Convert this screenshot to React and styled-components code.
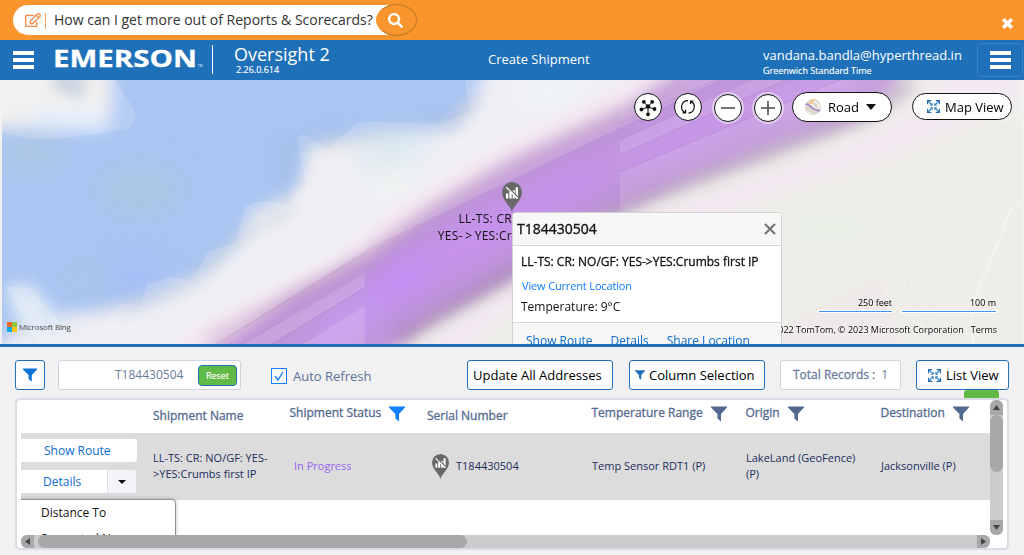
import React from "react";
import styled, { createGlobalStyle } from "styled-components";
import { FaSearch, FaRegEdit } from "react-icons/fa";

const Global = createGlobalStyle`
  *, *::before, *::after { box-sizing: border-box; }
  html, body { margin: 0; padding: 0; background: #f1f1f1; overflow: hidden; }
  body { font-family: "Open Sans", "Noto Sans", sans-serif; font-size: 13px; color: #111; }
  svg { display: block; flex: none; }
`;

const Page = styled.div`
  width: 1024px;
  height: 555px;
  display: flex;
  flex-direction: column;
  overflow: hidden;
  background: #f1f1f1;
`;

const Text = styled.span`
  display: block;
  white-space: nowrap;
  font-size: ${(p) => p.$size || 13}px;
  line-height: ${(p) => p.$line || 18}px;
  color: ${(p) => p.$color || "inherit"};
  letter-spacing: ${(p) => p.$track || 0}px;
  -webkit-text-stroke: ${(p) => (p.$heavy ? `${p.$heavy}px currentColor` : "0")};
`;

const Loose = styled.span`
  letter-spacing: 2.6px;
`;

/* ---------- promo bar ---------- */

const PromoBar = styled.div`
  height: 40px;
  flex: none;
  background: #f8952c;
  display: flex;
  align-items: center;
  justify-content: space-between;
  padding: 0 10px 0 13px;
`;

const AskBox = styled.div`
  display: flex;
  align-items: center;
  width: 404px;
  height: 30px;
  background: linear-gradient(to right, #fff 375px, transparent 375px);
  border-radius: 15px 0 0 15px;
  padding-left: 12px;
`;

const Caret = styled.span`
  width: 1px;
  height: 16px;
  margin: 1px 8px 0 4px;
  background: #f8a765;
`;

const AskButton = styled.span`
  display: flex;
  align-items: center;
  justify-content: center;
  width: 41px;
  height: 32px;
  margin-left: auto;
  padding-right: 2px;
  flex: none;
  border-radius: 50%;
  border: 1px solid #c47a2a;
  border-left-color: #f8952c;
  background: #f8952c;
  color: #fff;
`;

const CloseSlot = styled.div`
  margin-top: 6px;
`;

/* ---------- header ---------- */

const Header = styled.header`
  height: 40px;
  flex: none;
  background: #1e70b8;
  color: #fff;
  display: grid;
  grid-template-columns: 54px 159px 253px 1fr 214px 47px;
`;

const HeaderCell = styled.div`
  display: flex;
  flex-direction: column;
  padding: ${(p) => p.$pad || "0"};
  border-right: ${(p) => (p.$rule ? "1px solid transparent" : "0")};
  border-image: ${(p) =>
    p.$rule ? "linear-gradient(transparent 6px, #fff 6px, #fff 33px, transparent 33px) 1" : "none"};
`;

const Bars = styled.div`
  display: flex;
  flex-direction: column;
  gap: 3px;
  width: 21px;
`;

const Bar = styled.span`
  height: 4px;
  background: #fff;
`;

const MenuToggle = styled.div`
  display: flex;
  align-items: center;
  justify-content: center;
  height: 34px;
  margin: 3px 1px 0 0;
  border: 1px solid #3a82c2;
  border-radius: 4px;
`;

/* ---------- map ---------- */

const MapPane = styled.section`
  height: 264px;
  flex: none;
  margin: 0 2px;
  position: relative;
  overflow: hidden;
`;

const MapArt = styled.svg`
  width: 1020px;
  height: 264px;
`;

const MapControls = styled.div`
  position: absolute;
  top: 12px;
  right: 10px;
  display: flex;
  align-items: flex-start;
`;

const Round = styled.span`
  width: 28px;
  height: 28px;
  margin: ${(p) => (p.$halo ? 2 : 1)}px 12px 0 0;
  border-radius: 50%;
  border: 1px solid #111;
  background: #fff;
  display: flex;
  align-items: center;
  justify-content: center;
  box-shadow: ${(p) => (p.$halo ? "0 0 0 2px rgba(255,255,255,.45)" : "none")};
`;

const Pill = styled.span`
  display: flex;
  align-items: center;
  height: ${(p) => p.$h}px;
  width: 100px;
  border: 1px solid #111;
  border-radius: 16px;
  background: #fff;
  color: #000;
  margin: ${(p) => p.$margin};
  padding-left: ${(p) => p.$left}px;
  gap: ${(p) => p.$gap}px;
`;

const Pin = styled.div`
  position: absolute;
  left: 500px;
  top: 102px;
`;

const PinLabel = styled.div`
  position: absolute;
  right: 510px;
  top: 130px;
  display: flex;
  flex-direction: column;
  align-items: flex-end;
`;

const Popup = styled.div`
  position: absolute;
  left: 510px;
  top: 132px;
  width: 270px;
  height: 150px;
  background: #fff;
  border: 1px solid #d3d3d3;
  border-radius: 4px;
  overflow: hidden;
`;

const PopupHead = styled.div`
  height: 33px;
  background: #f7f7f7;
  border-bottom: 1px solid #d6d6d6;
  display: flex;
  align-items: center;
  justify-content: space-between;
  padding: 0 5px 0 4px;
`;

const PopupBody = styled.div`
  height: 76px;
  padding: 7px 8px 0;
  display: flex;
  flex-direction: column;
`;

const PopupLink = styled.div`
  padding-left: 1px;
`;

const PopupFoot = styled.div`
  height: 40px;
  background: #f7f7f7;
  border-top: 1px solid #d6d6d6;
  display: flex;
  gap: 18px;
  padding: 9px 13px 0;
`;

const BingMark = styled.div`
  position: absolute;
  left: 5px;
  bottom: 12px;
  display: flex;
  align-items: center;
  gap: 2px;
`;

const Credits = styled.div`
  position: absolute;
  right: 25px;
  bottom: 6px;
  width: 216px;
  overflow: hidden;
  display: flex;
  justify-content: flex-end;
  gap: 7px;
  color: #000;
  text-shadow: 0 0 2px #fff, 0 0 2px #fff;
`;

const Scales = styled.div`
  position: absolute;
  right: 26px;
  bottom: 32px;
  display: flex;
  gap: 10px;
  color: #000;
`;

const Scale = styled.div`
  width: ${(p) => p.$w}px;
  display: flex;
  flex-direction: column;
  align-items: flex-end;
`;

const ScaleLine = styled.span`
  width: 100%;
  height: 1px;
  background: #3b96ff;
  box-shadow: 0 0 0 1px #fff;
`;

/* ---------- list pane ---------- */

const ListPane = styled.section`
  flex: 1;
  border-top: 3px solid #1e70b8;
  padding: 13px 15px 0;
  display: flex;
  flex-direction: column;
`;

const Toolbar = styled.div`
  display: flex;
  height: 30px;
  flex: none;
`;

const Box = styled.div`
  display: flex;
  align-items: center;
  height: 30px;
  width: ${(p) => p.$w}px;
  margin-left: ${(p) => p.$ml || 0}px;
  padding-left: ${(p) => p.$pl || 0}px;
  gap: ${(p) => p.$gap || 0}px;
  border: 1px solid ${(p) => (p.$muted ? "#ced3df" : "#1e70b8")};
  border-radius: 3px;
  background: #fff;
  color: ${(p) => (p.$muted ? "#6a7c9e" : "#000")};
  flex: none;
`;

const Reset = styled.span`
  width: 39px;
  height: 21px;
  margin: 1px 3px 0 auto;
  border: 1px solid #1e70b8;
  border-radius: 4px;
  background: #62ba46;
  color: #fff;
  display: flex;
  align-items: center;
  justify-content: center;
`;

const Check = styled.div`
  display: flex;
  align-items: center;
  gap: 6px;
  width: 226px;
  padding: 2px 0 0 30px;
`;

const CheckBox = styled.span`
  width: 16px;
  height: 16px;
  border: 1px solid #0f80f5;
  background: #fff;
  display: flex;
  align-items: center;
  justify-content: center;
`;

const GreenTab = styled.div`
  width: 35px;
  height: 8px;
  flex: none;
  margin-left: 949px;
  border-radius: 3px 3px 0 0;
  background: #62ba46;
`;

const Card = styled.div`
  width: 994px;
  height: 152px;
  flex: none;
  border: 2px solid #d9dce6;
  border-radius: 5px;
  background: #fff;
  display: grid;
  grid-template: 135px 13px / 969px 13px;
  padding-left: 4px;
`;

const Viewport = styled.div`
  overflow: hidden;
  position: relative;
`;

const Row = styled.div`
  display: grid;
  grid-template-columns: 132px 136px 138px 164px 154px 135px 1fr;
  height: ${(p) => p.$h}px;
  background: ${(p) => p.$bg || "#fff"};
  color: ${(p) => p.$color};
  border-bottom: ${(p) => (p.$line ? "1px solid #d6daea" : "0")};
`;

const HeadCell = styled.div`
  display: flex;
  align-items: flex-start;
  gap: 8px;
  padding: ${(p) => (p.$filtered ? "4px 0 0 0.5px" : "7px 0 0")};
`;

const FilterSlot = styled.span`
  padding-top: 2px;
`;

const Cell = styled.div`
  display: flex;
  flex-direction: ${(p) => (p.$row ? "row" : "column")};
  align-items: ${(p) => (p.$row ? "center" : "flex-start")};
  justify-content: ${(p) => (p.$row ? "flex-start" : "center")};
  gap: ${(p) => p.$gap || 0}px;
  padding: 0 0 ${(p) => p.$pb || 0}px ${(p) => p.$pl || 0}px;
`;

const Actions = styled.div`
  display: flex;
  flex-direction: column;
  gap: 8px;
  padding-top: 6px;
`;

const ActionButton = styled.div`
  height: 23px;
  width: ${(p) => p.$w}px;
  border-radius: 0 3px 3px 0;
  overflow: hidden;
  background: #fff;
  display: flex;
  align-items: center;
  padding-left: ${(p) => p.$pl}px;
`;

const SplitArrow = styled.span`
  width: 29px;
  height: 23px;
  margin-left: auto;
  background: #f4f5fa;
  border-left: 1px solid #dcdee6;
  display: flex;
  align-items: center;
  justify-content: center;
`;

const Menu = styled.div`
  position: absolute;
  left: -4px;
  top: 99px;
  width: 159px;
  height: 80px;
  border: 1px solid #8d8d8d;
  border-radius: 4px;
  box-shadow: 0 0 4px rgba(0, 0, 0, 0.25);
  background: #fff;
  padding: 4px 0 0 23px;
`;

const VTrack = styled.div`
  display: flex;
  flex-direction: column;
  border-radius: 6px;
  background: #cbcbcb;
  overflow: hidden;
`;

const HTrack = styled(VTrack)`
  flex-direction: row;
`;

const Thumb = styled.span`
  width: ${(p) => p.$w}px;
  height: ${(p) => p.$h}px;
  margin: ${(p) => p.$m || "0"};
  border-radius: 7px;
  background: #a8a8a8;
`;

const ArrowBox = styled.span`
  width: ${(p) => p.$w}px;
  height: ${(p) => p.$h}px;
  margin: ${(p) => p.$m || "0"};
  background: #a8a8a8;
  display: flex;
  align-items: center;
  justify-content: center;
`;

/* ---------- drawings ---------- */

const Funnel = ({ size = 16, color = "#53698f" }) => (
  <svg width={size} height={size} viewBox="0 0 16 16" fill={color}>
    <path d="M0 0.5H16V1.6L10 8V15.6L6.4 12.6V8L0 1.6Z" />
  </svg>
);

const Expand = () => (
  <svg width="13" height="13" viewBox="0 0 13 13" fill="none" stroke="#1e70b8" strokeWidth="1.200">
    <path d="M.6 4.300V.6H4.300M8.700 .6h3.700V4.300M12.4 8.700v3.700H8.700M4.300 12.4H.6V8.700" />
    <path d="M.8.8l4.400 4.400M12.2.8L7.800 5.200M12.2 12.2L7.800 7.800M.8 12.2l4.400-4.400" strokeWidth="1.100" />
    <path d="M3 5.300h2.300V3M7.700 3v2.300h2.300M10 7.700H7.700V10M5.300 10V7.700H3" strokeWidth=".7" />
  </svg>
);

const Triangle = ({ dir, w = 9, h = 5, color = "#111" }) => {
  const shapes = {
    down: "0,0 10,0 5,10",
    up: "0,10 10,10 5,0",
    left: "10,0 10,10 0,5",
    right: "0,0 0,10 10,5",
  };
  return (
    <svg width={w} height={h} viewBox="0 0 10 10" preserveAspectRatio="none">
      <polygon points={shapes[dir]} fill={color} />
    </svg>
  );
};

const Marker = ({ w, h }) => (
  <svg width={w} height={h} viewBox="0 0 20 29" preserveAspectRatio="none">
    <path d="M10 29C8.500 23 0 17.500 0 10A10 10 0 0 1 20 10C20 17.500 11.500 23 10 29Z" fill="#686868" />
    <path d="M4 11h2.200v5H4zM7.300 9.500h2.400v6.500H7.300zM10.700 8h2.200v8h-2.200zM13.600 5H16v11h-2.400z" fill="#fff" />
    <path d="M5.400 4.300L16 14.800" stroke="#686868" strokeWidth="1.300" />
    <path d="M4.300 5L15.600 16" stroke="#fff" strokeWidth="1.300" />
  </svg>
);

const Hub = () => (
  <svg width="20" height="20" viewBox="0 0 20 20" stroke="#111" strokeWidth="1">
    <path d="M10 10L6 5M10 10L14 5M10 10L3.500 12.500M10 10L16.500 12M10 10v7" />
    <g stroke="none" fill="#111">
      <circle cx="10" cy="9.500" r="2.300" />
      <circle cx="5.800" cy="4.800" r="1.900" />
      <circle cx="14.200" cy="4.800" r="1.900" />
      <circle cx="3.500" cy="12.500" r="1.900" />
      <circle cx="16.500" cy="12" r="1.900" />
      <circle cx="10" cy="17.300" r="1.900" />
    </g>
  </svg>
);

const Refresh = () => (
  <svg width="18" height="18" viewBox="0 0 18 18" fill="none" stroke="#111" strokeWidth="1.200">
    <path d="M6.200 14.600A6.300 6.300 0 0 1 9 2.600M12 3.400A6.300 6.300 0 0 1 9.500 15.200M3.600 14.800h3v-3M14.600 3h-3v3" />
  </svg>
);

const Globe = () => (
  <svg width="16" height="16" viewBox="0 0 16 16">
    <clipPath id="globeClip"><circle cx="8" cy="8" r="8" /></clipPath>
    <g clipPath="url(#globeClip)" fill="none">
      <rect width="16" height="16" fill="#dcd8cb" />
      <path d="M7 0L16 8M10 12L16 6M2 13L8 16M5 3L12 12" stroke="#f6f3ea" strokeWidth="1.500" />
      <path d="M5 5L9 0" stroke="#f0b968" strokeWidth="1.600" />
      <path d="M0 5C5 4 6 12 16 12" stroke="#a583c4" strokeWidth="1.800" />
    </g>
  </svg>
);

const MapCanvas = () => (
  <MapArt viewBox="2 80 1020 264">
    <defs>
      <filter id="soft" filterUnits="userSpaceOnUse" x="-60" y="0" width="1160" height="440"><feGaussianBlur stdDeviation="8" /></filter>
      <filter id="wide" filterUnits="userSpaceOnUse" x="-60" y="0" width="1160" height="440"><feGaussianBlur stdDeviation="14" /></filter>
    </defs>
    <rect x="0" y="80" width="1024" height="264" fill="#eeede9" />
    <g filter="url(#soft)">
      <path d="M480 -20H760L610 105L512 155L430 205L370 250L280 290L160 400H-60V325L150 290L205 270L250 225L300 195L320 155L400 140Z" fill="#eeeef3" />
      <path d="M-80 -20H512L478 95L452 125L430 133L370 135L310 145L300 185L285 198L255 212L235 245L200 276L145 298L90 312L40 315L-80 400Z" fill="#a9c5f2" />
      <path d="M710 20L620 88L512 140L400 205L340 255L200 325L110 400L190 400L370 262L512 165L720 70Z" fill="#f3e2ef" />
      <path d="M745 20L620 112L512 162L430 210L370 254L290 296L140 400H330L425 325L512 278L600 220L690 180L780 146L870 114L950 20Z" fill="#bf95d9" />
      <path d="M350 400L430 342L512 290L620 228L730 186L830 152L895 124L960 60L1020 60V98L900 150L760 198L620 262L500 315L420 400Z" fill="#f3e8f2" />
      <path d="M-60 20H102L112 95L108 127L-60 128Z" fill="#efefed" />
      <path d="M30 110H108V130H40Z" fill="#e0ecfb" />
      <path d="M20 335H75L32 285H5Z" fill="#dce8f5" />
    </g>
    <g filter="url(#wide)">
      <ellipse cx="410" cy="275" rx="60" ry="20" transform="rotate(-32 410 275)" fill="#c48ff5" />
      <ellipse cx="480" cy="235" rx="75" ry="22" transform="rotate(-30 480 235)" fill="#c792ed" />
      <ellipse cx="345" cy="325" rx="45" ry="14" transform="rotate(-30 345 325)" fill="#c69af6" />
      <ellipse cx="560" cy="190" rx="60" ry="20" transform="rotate(-28 560 190)" fill="#c491ea" />
      <ellipse cx="690" cy="132" rx="90" ry="18" transform="rotate(-24 690 132)" fill="#c997ea" />
      <ellipse cx="810" cy="90" rx="60" ry="14" transform="rotate(-20 810 90)" fill="#cda0ef" />
      <ellipse cx="392" cy="150" rx="40" ry="14" transform="rotate(-15 392 150)" fill="#cfe4ee" />
      <ellipse cx="390" cy="178" rx="25" ry="12" fill="#eef3ee" />
      <ellipse cx="830" cy="228" rx="55" ry="16" fill="#e9f1e5" />
      <ellipse cx="140" cy="190" rx="40" ry="20" fill="#a9c8df" />
      <ellipse cx="130" cy="275" rx="30" ry="18" fill="#a6bdf8" />
      <ellipse cx="30" cy="155" rx="35" ry="12" fill="#afc9dd" />
      <ellipse cx="250" cy="110" rx="60" ry="12" fill="#abc8f5" />
      <ellipse cx="90" cy="278" rx="25" ry="14" fill="#a9c6e6" />
      <ellipse cx="550" cy="90" rx="30" ry="10" fill="#eef6fb" />
    </g>
    <g filter="url(#soft)" fill="none" strokeWidth="8" strokeLinecap="round">
      <path d="M210 340L290 298L360 262L430 212L512 165L620 115L680 85" stroke="#a87fae" strokeOpacity=".6" />
      <path d="M400 338L500 280L580 232L650 196L770 152L870 114L910 85" stroke="#866a90" strokeOpacity=".7" />
      <path d="M120 312L190 285L245 235L290 210" stroke="#a8b9cd" strokeOpacity=".55" />
      <path d="M285 195L285 145L365 136L450 120" stroke="#a0b4d2" strokeOpacity=".45" />
      <path d="M60 78L78 88" stroke="#b3c3dc" strokeWidth="14" />
      <path d="M450 128L475 100" stroke="#b2bfda" />
    </g>
    <g fill="#fff" fillOpacity=".14">
      <path d="M2 80V132L28 139H58L130 129C137 120 136 110 130 103L115 80H98L80 98C65 102 52 101 48 90L52 80Z" />
      <path d="M5 286L31 288L70 335L92 334L120 303L141 306L147 284L170 277L192 281L208 252L235 243L246 206C265 196 278 206 291 204L294 190L307 189L297 141C298 133 305 132 310 138L327 150L359 122H380L440 124L470 112L465 80H720L365 250L216 344H37Z" />
      <path d="M243 344L365 272V287L272 344ZM302 344L365 304V344Z" />
      <path d="M620 140L750 80H785L620 155ZM620 172L840 80H1022V123H900L620 220Z" fillOpacity=".11" />
    </g>
    <g fill="none" stroke="#765b85" strokeOpacity=".16">
      <path d="M216 344L366 253M243 344L366 273M272 344L366 287M302 344L366 305" />
      <path d="M620 123L715 80M620 140L752 80M620 155L785 80M620 172L840 80" />
    </g>
    <path d="M620 80L715 80L620 123Z" fill="#fff" fillOpacity=".06" />
    <g fill="none">
      <path d="M755 334L890 267Q902 262 909 272L945 350" stroke="#e5e3dd" strokeWidth="12" />
      <path d="M755 334L890 267Q902 262 909 272L945 350" stroke="#efedea" strokeWidth="10.800" />
      <path d="M1022 202Q1008 208 1003 230L976 295Q968 318 974 344" stroke="#f4f3ef" strokeWidth="2" />
    </g>
    <path d="M780 330L880 280L900 344H780Z" fill="#f3e3ea" fillOpacity=".4" />
  </MapArt>
);

const columns = [
  { label: "" },
  { label: "Shipment Name" },
  { label: "Shipment Status", filter: "#0f80ff" },
  { label: "Serial Number" },
  { label: "Temperature Range", filter: "#53698f" },
  { label: "Origin", filter: "#53698f" },
  { label: "Destination", filter: "#53698f" },
];

export default function App() {
  return (
    <Page>
      <Global />
      <PromoBar>
        <AskBox>
          <FaRegEdit size={16} color="#f58a4b" />
          <Caret />
          <Text $size={14} $color="#333">How can I get more out of Reports &amp; Scorecards?</Text>
          <AskButton><FaSearch size={15} /></AskButton>
        </AskBox>
        <CloseSlot>
          <svg width="13" height="13" viewBox="0 0 13 13" stroke="#fff" strokeWidth="3.600" strokeLinecap="square">
            <path d="M3.500 3.500l6 6M9.500 3.500l-6 6" />
          </svg>
        </CloseSlot>
      </PromoBar>

      <Header>
        <HeaderCell $pad="11px 0 0 13px">
          <Bars><Bar /><Bar /><Bar /></Bars>
        </HeaderCell>
        <HeaderCell $pad="5px 0 0 0" $rule>
          <svg width="150" height="30" viewBox="0 0 150 30" fill="#fff" fontFamily="Open Sans" fontWeight="700">
            <text x="-1" y="22" fontSize="23" stroke="#fff" strokeWidth=".3" textLength="144" lengthAdjust="spacingAndGlyphs">EMERSON</text>
            <text x="144" y="22" fontSize="3" fontWeight="400">TM</text>
          </svg>
        </HeaderCell>
        <HeaderCell $pad="4px 0 0 21px">
          <Text $size={18} $line={20}>Oversight 2</Text>
          <HeaderCell $pad="0 0 0 2px"><Text $size={9} $line={12} $heavy={0.15}>2.26.0.614</Text></HeaderCell>
        </HeaderCell>
        <HeaderCell $pad="10px 0 0 22px"><Text $size={13}>Create Shipment</Text></HeaderCell>
        <HeaderCell $pad="6px 0 0 0">
          <Text $size={13}>vandana.bandla@hyperthread.in</Text>
          <Text $size={9} $line={13} $heavy={0.15}>Greenwich Standard Time</Text>
        </HeaderCell>
        <MenuToggle><Bars><Bar /><Bar /><Bar /></Bars></MenuToggle>
      </Header>

      <MapPane>
        <MapCanvas />
        <PinLabel>
          <Text $size={12} $line={17} $track={0.3}>LL-TS: CR</Text>
          <Text $size={12} $line={17} $track={0.3}>YES<Loose>-&gt;</Loose>YES:Cr</Text>
        </PinLabel>
        <Pin><Marker w={20} h={30} /></Pin>

        <Popup>
          <PopupHead>
            <Text $size={14} $heavy={0.35}>T184430504</Text>
            <svg width="12" height="12" viewBox="0 0 12 12" stroke="#757575" strokeWidth="2.200">
              <path d="M1 1l10 10M11 1L1 11" />
            </svg>
          </PopupHead>
          <PopupBody>
            <Text $size={12} $heavy={0.3}>LL-TS: CR: NO/GF: YES-&gt;YES:Crumbs first IP</Text>
            <PopupLink><Text $size={11} $line={30} $track={-0.15} $color="#0d7dff">View Current Location</Text></PopupLink>
            <Text $size={12} $line={12}>Temperature: 9°C</Text>
          </PopupBody>
          <PopupFoot>
            <Text $size={12} $color="#0b6cc9">Show Route</Text>
            <Text $size={12} $color="#0b6cc9">Details</Text>
            <Text $size={12} $color="#0b6cc9">Share Location</Text>
          </PopupFoot>
        </Popup>

        <MapControls>
          <Round><Hub /></Round>
          <Round><Refresh /></Round>
          <Round $halo>
            <svg width="14" height="14" stroke="#444" strokeWidth="1.500"><path d="M0 7h14" /></svg>
          </Round>
          <Round $halo>
            <svg width="14" height="14" stroke="#444" strokeWidth="1.500"><path d="M0 7h14M7 0v14" /></svg>
          </Round>
          <Pill $h={30} $margin="0 20px 0 -2px" $left={12} $gap={7}>
            <Globe />
            <Text $size={13}>Road</Text>
            <Triangle dir="down" w={10} h={6} />
          </Pill>
          <Pill $h={27} $margin="1px 0 0" $left={14} $gap={5}>
            <Expand /><Text $size={13}>Map View</Text>
          </Pill>
        </MapControls>

        <BingMark>
          <svg width="10" height="10" viewBox="0 0 10 10">
            <path d="M0 0h5v5H0z" fill="#f26522" /><path d="M5 0h5v5H5z" fill="#8dc63f" />
            <path d="M0 5h5v5H0z" fill="#00aeef" /><path d="M5 5h5v5H5z" fill="#ffc20e" />
          </svg>
          <Text $size={8} $line={10} $track={-0.15} $color="#606060" $heavy={0.1}>Microsoft Bing</Text>
        </BingMark>
        <Scales>
          <Scale $w={73}><Text $size={9} $line={17}>250 feet</Text><ScaleLine /></Scale>
          <Scale $w={94}><Text $size={9} $line={17}>100 m</Text><ScaleLine /></Scale>
        </Scales>
        <Credits>
          <Text $size={9} $line={16}>© 2022 TomTom, © 2023 Microsoft Corporation</Text>
          <Text $size={9} $line={16}>Terms</Text>
        </Credits>
      </MapPane>

      <ListPane>
        <Toolbar>
          <Box $w={30} $pl={7}><Funnel size={14} color="#0b72d8" /></Box>
          <Box $w={183} $ml={13} $pl={56} $muted>
            <Text $size={12}>T184430504</Text>
            <Reset><Text $size={9} $heavy={0.15}>Reset</Text></Reset>
          </Box>
          <Check>
            <CheckBox>
              <svg width="10" height="10" viewBox="0 0 10 10" fill="none" stroke="#0f80f5" strokeWidth="1.400"><path d="M1 5l3 4 5-8" /></svg>
            </CheckBox>
            <Text $size={13} $color="#5b7198">Auto Refresh</Text>
          </Check>
          <Box $w={146} $pl={5}><Text $size={13}>Update All Addresses</Text></Box>
          <Box $w={136} $ml={16} $pl={5} $gap={4}>
            <Funnel size={10} color="#1e70b8" /><Text $size={13}>Column Selection</Text>
          </Box>
          <Box $w={121} $ml={15} $pl={12} $gap={6} $muted>
            <Text $size={12} $heavy={0.3}>Total Records :</Text><Text $size={12}>1</Text>
          </Box>
          <Box $w={93} $ml={15} $pl={11} $gap={5}><Expand /><Text $size={13}>List View</Text></Box>
        </Toolbar>
        <GreenTab />
        <Card>
          <Viewport>
            <Row $h={33} $color="#53698f">
              {columns.map((c) => (
                <HeadCell key={c.label} $filtered={Boolean(c.filter)}>
                  <Text $size={12} $heavy={0.3}>{c.label}</Text>
                  {c.filter && <FilterSlot><Funnel size={16} color={c.filter} /></FilterSlot>}
                </HeadCell>
              ))}
            </Row>
            <Row $h={67} $bg="#dcdcdc" $color="#1b2d5c" $line>
              <Actions>
                <ActionButton $w={116} $pl={23}><Text $size={12} $color="#0b6cd0">Show Route</Text></ActionButton>
                <ActionButton $w={115} $pl={22}>
                  <Text $size={12} $color="#0b6cd0">Details</Text>
                  <SplitArrow><Triangle dir="down" w={8} h={4} /></SplitArrow>
                </ActionButton>
              </Actions>
              <Cell>
                <Text $size={11} $line={16}>LL-TS: CR: NO/GF: YES-</Text>
                <Text $size={11} $line={16}>&gt;YES:Crumbs first IP</Text>
              </Cell>
              <Cell $pl={5}><Text $size={11} $color="#9a66f0">In Progress</Text></Cell>
              <Cell $row $gap={7} $pl={5}><Marker w={17} h={25} /><Text $size={11}>T184430504</Text></Cell>
              <Cell $pl={1}><Text $size={11}>Temp Sensor RDT1 (P)</Text></Cell>
              <Cell $pl={1}>
                <Text $size={11} $line={16}>LakeLand (GeoFence)</Text>
                <Text $size={11} $line={16}>(P)</Text>
              </Cell>
              <Cell $pl={1}><Text $size={11}>Jacksonville (P)</Text></Cell>
            </Row>
            <Menu>
              <Text $size={12}>Distance To</Text>
              <Text $size={12} $line={34}>Suggested Name</Text>
            </Menu>
          </Viewport>
          <VTrack>
            <ArrowBox $w={13} $h={15}><Triangle dir="up" w={7} h={5} color="#444" /></ArrowBox>
            <Thumb $w={13} $h={57} />
            <ArrowBox $w={13} $h={15} $m="auto 0 0"><Triangle dir="down" w={7} h={5} color="#444" /></ArrowBox>
          </VTrack>
          <HTrack>
            <ArrowBox $w={13} $h={13}><Triangle dir="left" w={5} h={7} color="#444" /></ArrowBox>
            <Thumb $w={429} $h={13} $m="0 0 0 4px" />
            <ArrowBox $w={13} $h={13} $m="0 0 0 auto"><Triangle dir="right" w={5} h={7} color="#444" /></ArrowBox>
          </HTrack>
        </Card>
      </ListPane>
    </Page>
  );
}
